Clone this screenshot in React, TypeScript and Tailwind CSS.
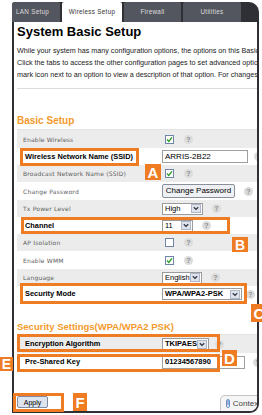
import React from "react";

function Help({ className = "" }: { className?: string }) {
  return (
    <span
      className={`w-[9px] h-[9px] rounded-full bg-[#dcdcdc] text-[#8c8c8c] text-[7px] font-bold leading-none flex items-center justify-center shrink-0 font-['Liberation_Sans',Arial,sans-serif] ${className}`}
    >
      ?
    </span>
  );
}

function Checkbox({ checked }: { checked?: boolean }) {
  return (
    <span className="ml-[3px] w-[9px] h-[9px] border border-[#6f84a8] bg-white flex items-center justify-center shrink-0">
      {checked && (
        <svg width="7" height="7" viewBox="0 0 7 7">
          <path d="M1 3.6 L2.8 5.4 L6 1.4" fill="none" stroke="#2f9e2f" strokeWidth="1.4" />
        </svg>
      )}
    </span>
  );
}

function Select({ value, w, bold }: { value: string; w: string; bold?: boolean }) {
  return (
    <div className={`${w} h-[12px] border border-[#9b9b9b] bg-white flex items-center justify-between pl-[2px] pr-px shrink-0`}>
      <span className={`text-[7.5px] leading-none text-black whitespace-nowrap ${bold ? "font-bold" : ""}`}>{value}</span>
      <span className="w-[10px] h-[9px] bg-[#dfe3ec] border border-[#aeb7c9] flex items-center justify-center">
        <svg width="6" height="5" viewBox="0 0 6 5">
          <path d="M0.8 1.2 L3 3.4 L5.2 1.2" fill="none" stroke="#2d3442" strokeWidth="1.3" />
        </svg>
      </span>
    </div>
  );
}

interface RowProps {
  label: string;
  shade?: boolean;
  strong?: boolean;
  h: string;
  children: React.ReactNode;
}

function Row({ label, shade, strong, h, children }: RowProps) {
  return (
    <div className={`${h} ml-[3px] flex items-center ${shade ? "bg-[#ececec]" : "bg-white"}`}>
      {strong ? (
        <div className="w-[145px] shrink-0 pl-[8px] text-[7.4px] font-bold text-black whitespace-nowrap">{label}</div>
      ) : (
        <div className="w-[145px] shrink-0 pl-[6px] text-[6px] tracking-[0.2px] text-[#5e5e5e] whitespace-nowrap font-['DejaVu_Sans',sans-serif]">
          {label}
        </div>
      )}
      <div className="flex items-center">{children}</div>
    </div>
  );
}

export default function App() {
  return (
    <div className="relative w-[262px] h-[415px] bg-white overflow-hidden font-['Liberation_Sans',Arial,sans-serif]">
      {/* Frame */}
      <div className="ml-[12px] mt-[2px] w-[247px] h-[411px] bg-[#2f3035] rounded-tl-[3px] rounded-tr-[10px] rounded-br-[9px] overflow-hidden flex flex-col">
        {/* Tabs */}
        <div className="h-[20px] flex gap-[2px] shrink-0 text-[6.3px] tracking-[0.3px]">
          <div className="w-[48px] bg-[#53565e] rounded-t-[2px] text-[#dedede] flex items-center pl-[4px]">LAN Setup</div>
          <div className="w-[60px] bg-white rounded-t-[2px] text-[#333] flex items-center justify-center">Wireless Setup</div>
          <div className="w-[57px] bg-[#53565e] rounded-t-[2px] text-[#dedede] flex items-center justify-center">Firewall</div>
          <div className="w-[58px] bg-[#53565e] rounded-t-[2px] text-[#dedede] flex items-center justify-center">Utilities</div>
        </div>

        {/* Content */}
        <div className="flex-1 bg-white mx-[2px] mb-[2px] rounded-br-[7px] overflow-hidden flex flex-col">
          <h1 className="mt-[2px] pl-[3px] text-[13px] leading-[16px] font-bold text-black">System Basic Setup</h1>
          <div className="mt-[5px] pl-[3px] text-[7.2px] leading-[12px] text-[#1a1a1a] whitespace-nowrap">
            <p>While your system has many configuration options, the options on this Basic Setup page</p>
            <p>Click the tabs to access the other configuration pages to set advanced options. Click</p>
            <p>mark icon next to an option to view a description of that option. For changes to take</p>
          </div>
          <div className="mt-[7px] ml-[3px] h-px bg-[#dcdcdc] shrink-0" />

          <h2 className="mt-[26px] pl-[3px] text-[10px] leading-[12px] font-bold text-[#f49a2c]">Basic Setup</h2>
          <div className="mt-[2px] ml-[3px] h-px bg-[#e4e4e4] shrink-0" />

          <Row label="Enable Wireless" shade h="h-[18px]">
            <Checkbox checked />
            <Help className="ml-[10px]" />
          </Row>
          <Row label="Wireless Network Name (SSID)" strong h="h-[17px]">
            <div className="w-[86px] h-[13px] border border-[#a0a0a0] bg-white flex items-center pl-[2px] text-[8px] text-black">ARRIS-2B22</div>
            <Help className="ml-[6px]" />
          </Row>
          <Row label="Broadcast Network Name (SSID)" shade h="h-[17px]">
            <Checkbox checked />
            <Help className="ml-[10px]" />
          </Row>
          <Row label="Change Password" h="h-[18px]">
            <button className="w-[73px] h-[14px] rounded-[2px] border border-[#8a8f99] bg-[#eef0f3] text-[8px] leading-none text-black">Change Password</button>
            <Help className="ml-[9px]" />
          </Row>
          <Row label="Tx Power Level" shade h="h-[17px]">
            <Select value="High" w="w-[41px]" />
            <Help className="ml-[9px]" />
          </Row>
          <Row label="Channel" strong h="h-[17px]">
            <Select value="11" w="w-[31px]" />
            <Help className="ml-[9px]" />
          </Row>
          <Row label="AP Isolation" shade h="h-[17px]">
            <Checkbox />
            <Help className="ml-[10px]" />
          </Row>
          <Row label="Enable WMM" h="h-[18px]">
            <Checkbox checked />
            <Help className="ml-[10px]" />
          </Row>
          <Row label="Language" shade h="h-[17px]">
            <Select value="English" w="w-[40px]" />
            <Help className="ml-[9px]" />
          </Row>
          <Row label="Security Mode" strong h="h-[16px]">
            <Select value="WPA/WPA2-PSK" w="w-[80px]" bold />
            <Help className="ml-[4px]" />
          </Row>

          <h2 className="mt-[19px] pl-[3px] text-[9.5px] leading-[12px] font-bold text-[#f49a2c] whitespace-nowrap">
            Security Settings(WPA/WPA2 PSK)
          </h2>
          <div className="mt-px ml-[3px] h-px bg-[#e4e4e4] shrink-0" />

          <Row label="Encryption Algorithm" strong shade h="h-[18px]">
            <Select value="TKIPAES" w="w-[47px]" bold />
            <Help className="ml-[6px]" />
          </Row>
          <Row label="Pre-Shared Key" strong h="h-[18px]">
            <div className="w-[83px] h-[13px] border border-[#a0a0a0] bg-white flex items-center pl-[2px] text-[7.5px] font-bold text-black">01234567890</div>
            <Help className="ml-[8px]" />
          </Row>

          <div className="mt-auto flex items-end">
            <button className="mb-[3px] ml-[3px] w-[31px] h-[12px] rounded-[2px] border border-[#7d8aa3] bg-[#dde4ee] text-[7px] leading-none text-black">Apply</button>
            <div className="ml-auto -mr-[20px] w-[57px] h-[16px] rounded-tl-[5px] border border-b-0 border-[#c4c4c4] bg-[#f5f5f5] flex items-center pl-[5px] gap-[3px] shrink-0">
              <span className="w-[9px] h-[9px] rounded-full border border-[#6b90c8] bg-[#e9f0fb] text-[#3b6db5] text-[6.5px] font-bold leading-none flex items-center justify-center">i</span>
              <span className="text-[8px] text-[#444] whitespace-nowrap">Context Help</span>
            </div>
          </div>
        </div>
      </div>

      {/* Annotation boxes */}
      <div className="absolute left-[20px] top-[148px] w-[119px] h-[18px] border-[3px] border-[#ef7b22]" />
      <div className="absolute left-[21px] top-[217px] w-[209px] h-[17px] border-[3px] border-[#ef7b22]" />
      <div className="absolute left-[20px] top-[283px] w-[227px] h-[21px] border-[3px] border-[#ef7b22]" />
      <div className="absolute left-[17px] top-[334px] w-[203px] h-[18px] border-[3px] border-[#ef7b22]" />
      <div className="absolute left-[17px] top-[354px] w-[203px] h-[18px] border-[3px] border-[#ef7b22]" />
      <div className="absolute left-[13px] top-[393px] w-[51px] h-[19px] border-[3px] border-[#ef7b22]" />

      {/* Annotation letters */}
      <div className="absolute left-[145px] top-[164px] w-[16px] h-[16px] bg-[#ef7b22] text-white text-[15px] font-bold leading-none flex items-center justify-center">A</div>
      <div className="absolute left-[232px] top-[237px] w-[16px] h-[15px] bg-[#ef7b22] text-white text-[14px] font-bold leading-none flex items-center justify-center">B</div>
      <div className="absolute left-[251px] top-[304px] w-[16px] h-[18px] bg-[#ef7b22] text-white text-[15px] font-bold leading-none flex items-center justify-center">C</div>
      <div className="absolute left-[222px] top-[350px] w-[15px] h-[16px] bg-[#ef7b22] text-white text-[15px] font-bold leading-none flex items-center justify-center">D</div>
      <div className="absolute left-0 top-[357px] w-[13px] h-[14px] bg-[#ef7b22] text-white text-[14px] font-bold leading-none flex items-center justify-center">E</div>
      <div className="absolute left-[73px] top-[393px] w-[14px] h-[18px] bg-[#ef7b22] text-white text-[15px] font-bold leading-none flex items-center justify-center">F</div>
    </div>
  );
}
